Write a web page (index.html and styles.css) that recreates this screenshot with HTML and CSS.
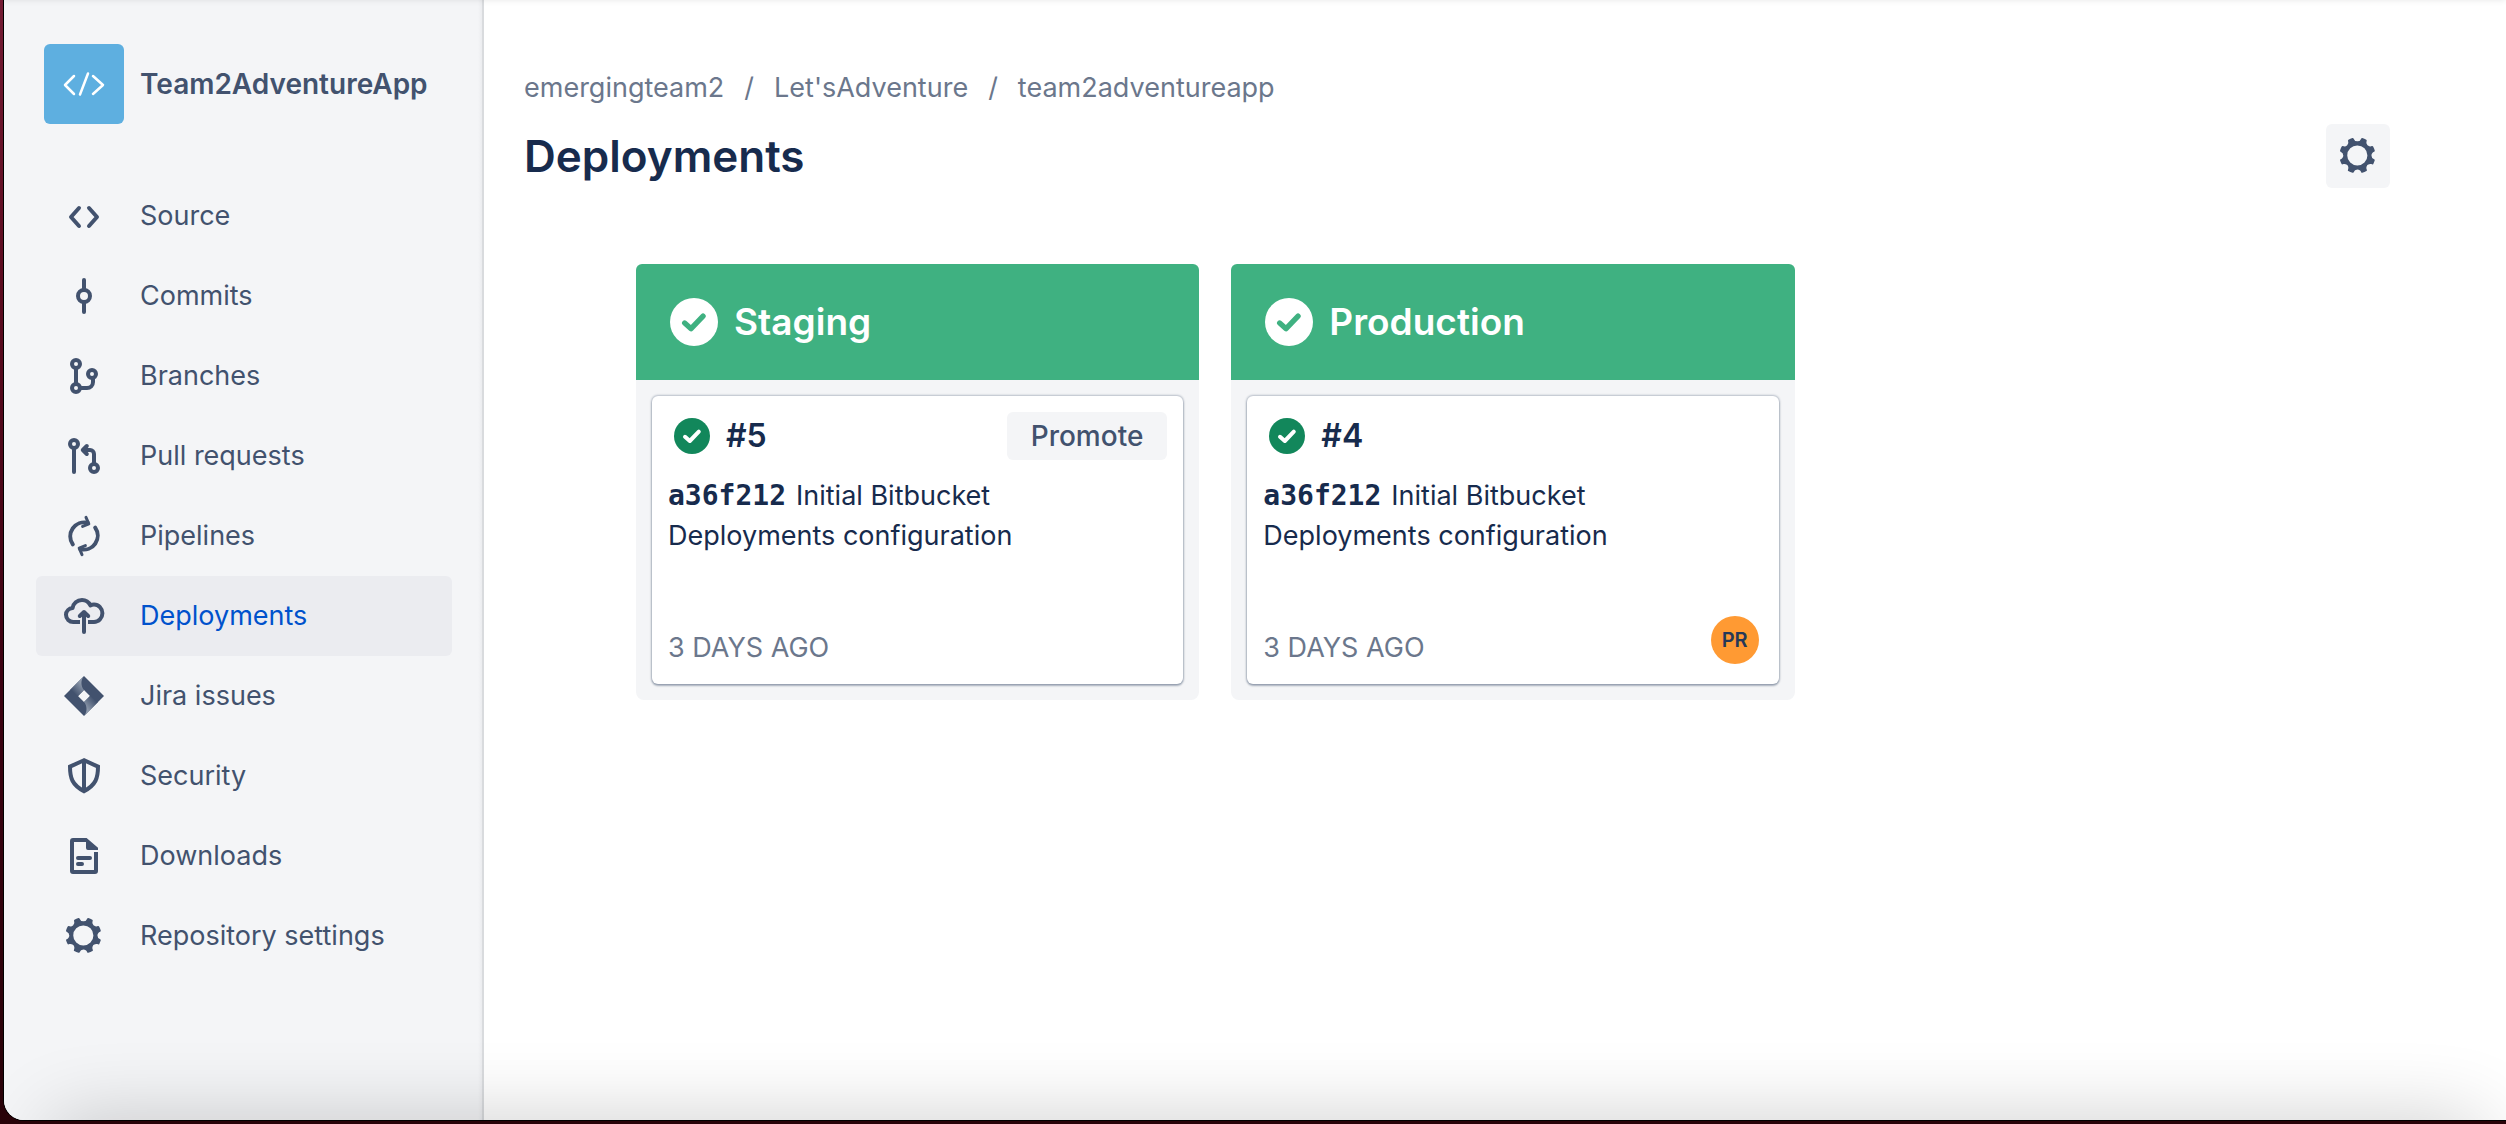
FILE: index.html
```html
<!DOCTYPE html>
<html lang="en">
<head>
<meta charset="utf-8">
<title>Deployments - team2adventureapp</title>
<link rel="stylesheet" href="styles.css">
</head>
<body>
<div class="window">
  <aside class="sidebar">
    <a class="repo" href="#">
      <svg class="repo-logo" viewBox="0 0 80 80" aria-hidden="true"><path d="M30 32l-9 9 9 9M49 32l10 9-10 9M44 29.500l-8 21"/></svg>
      <span>Team2AdventureApp</span>
    </a>
    <nav class="nav" aria-label="Repository">
      <a class="nav-item" href="#">
        <svg class="icon" viewBox="0 0 24 24"><path d="M9.500 8l-4 4.500 4 4.500M14.500 8l4 4.500-4 4.500"/></svg>
        <span>Source</span>
      </a>
      <a class="nav-item" href="#">
        <svg class="icon" viewBox="0 0 24 24"><circle cx="12" cy="12" r="3"/><path d="M12 4v5M12 15v5"/></svg>
        <span>Commits</span>
      </a>
      <a class="nav-item" href="#">
        <svg class="icon" viewBox="0 0 24 24"><circle cx="8" cy="6" r="2"/><circle cx="8" cy="18" r="2"/><circle cx="16" cy="11" r="2"/><path d="M8 8v8M10 18h3.500a3 3 0 0 0 3-3v-2"/></svg>
        <span>Branches</span>
      </a>
      <a class="nav-item" href="#">
        <svg class="icon" viewBox="0 0 24 24"><circle cx="7" cy="6" r="2"/><circle cx="17" cy="18" r="2"/><path d="M7 8v12M17 16v-5a2 2 0 0 0-2-2h-3.500M13.400 7l-2 2 2 2"/></svg>
        <span>Pull requests</span>
      </a>
      <a class="nav-item" href="#">
        <svg class="icon" viewBox="0 0 24 24"><path d="M6.400 16.200A7 7 0 0 1 13.800 5.400M17.600 7.800A7 7 0 0 1 10.200 18.600"/><path class="fine" d="M13 2.700l1.400 3.200-3.100 1.300M11 21.300l-1.400-3.200 3.100-1.300"/></svg>
        <span>Pipelines</span>
      </a>
      <a class="nav-item selected" href="#" aria-current="page">
        <svg class="icon" viewBox="0 0 24 24"><path class="butt" d="M10 15H6.700A3.600 3.600 0 0 1 3 11.400C3 9.500 4.500 8.200 6.300 8 6.600 5.700 8.600 4 11 4c1.900 0 3.400 1 4.200 2.700.6-.3 1.200-.4 1.800-.4a4.200 4.350 0 0 1 0 8.700h-3"/><path d="M12 20V10M9.900 12l2.100-2 2.100 2"/></svg>
        <span>Deployments</span>
      </a>
      <a class="nav-item" href="#">
        <svg class="icon solid" viewBox="0 0 24 24">
          <defs>
            <linearGradient id="fade-a" x1="11" y1="6" x2="6.500" y2="10" gradientUnits="userSpaceOnUse"><stop offset="0" stop-color="#8d99ab"/><stop offset="1" stop-color="#42526e"/></linearGradient>
            <linearGradient id="fade-b" x1="13" y1="18" x2="17.500" y2="14" gradientUnits="userSpaceOnUse"><stop offset="0" stop-color="#8d99ab"/><stop offset="1" stop-color="#42526e"/></linearGradient>
          </defs>
          <path fill-rule="evenodd" d="M12 2l10 10-10 10L2 12zM12 9l-3 3 3 3 3-3z"/>
          <path fill="url(#fade-a)" d="M12 2C10.300 4 10.300 7 12 9l-3 3-4-3z"/>
          <path fill="url(#fade-b)" d="M12 22c1.700-2 1.700-5 0-7l3-3 4 3z"/>
        </svg>
        <span>Jira issues</span>
      </a>
      <a class="nav-item" href="#">
        <svg class="icon" viewBox="0 0 24 24"><path class="miter" d="M12 4.100L5 7.300c0 5.700 1 9.100 7 12.300 6-3.200 7-6.600 7-12.300z"/><path class="butt" d="M12 4v15.500"/></svg>
        <span>Security</span>
      </a>
      <a class="nav-item" href="#">
        <svg class="icon" viewBox="0 0 24 24"><path class="butt" d="M18 10v9.500a.5.5 0 0 1-.5.5h-11a.5.5 0 0 1-.5-.5v-15a.5.5 0 0 1 .5-.5H13"/><path class="fill" d="M12 3h1.300L19 7.900V9h-5a1 1 0 0 1-1-1V4z"/><path d="M9 13h6M9 16h2"/></svg>
        <span>Downloads</span>
      </a>
      <a class="nav-item" href="#">
        <svg class="icon solid" viewBox="0 0 24 24"><path id="gear" d="M11.701 16.700a5.002 5.002 0 1 1 0-10.003 5.002 5.002 0 0 1 0 10.004m8.368-3.117a1.995 1.995 0 0 1-1.346-1.885c0-.876.563-1.613 1.345-1.885a.48.48 0 0 0 .315-.574 8.947 8.947 0 0 0-.836-1.993.477.477 0 0 0-.598-.195 2.040 2.040 0 0 1-1.290.08 1.988 1.988 0 0 1-1.404-1.395 2.040 2.040 0 0 1 .076-1.297.478.478 0 0 0-.196-.597 8.980 8.980 0 0 0-1.975-.826.479.479 0 0 0-.574.314 1.995 1.995 0 0 1-1.885 1.346 1.994 1.994 0 0 1-1.884-1.345.482.482 0 0 0-.575-.315c-.708.2-1.379.485-2.004.842a.47.47 0 0 0-.198.582A2.002 2.002 0 0 1 4.445 7.060a.478.478 0 0 0-.595.196 8.946 8.946 0 0 0-.833 1.994.48.48 0 0 0 .308.572 1.995 1.995 0 0 1 1.323 1.877c0 .867-.552 1.599-1.324 1.877a.479.479 0 0 0-.308.57 8.990 8.990 0 0 0 .723 1.790.477.477 0 0 0 .624.194c.595-.273 1.343-.264 2.104.238.117.077.225.185.302.3.527.8.512 1.580.198 2.188a.473.473 0 0 0 .168.628 8.946 8.946 0 0 0 2.110.897.474.474 0 0 0 .57-.313 1.995 1.995 0 0 1 1.886-1.353c.878 0 1.618.567 1.887 1.353a.475.475 0 0 0 .57.313 8.964 8.964 0 0 0 2.084-.883.473.473 0 0 0 .167-.631c-.318-.608-.337-1.393.191-2.195.077-.116.185-.225.302-.302.772-.511 1.527-.513 2.125-.23a.477.477 0 0 0 .628-.19 8.925 8.925 0 0 0 .728-1.793.478.478 0 0 0-.314-.573"/></svg>
        <span>Repository settings</span>
      </a>
    </nav>
  </aside>

  <main class="main">
    <nav class="breadcrumbs" aria-label="Breadcrumbs">
      <a href="#">emergingteam2</a><span>/</span><a href="#">Let'sAdventure</a><span>/</span><a href="#">team2adventureapp</a>
    </nav>
    <header class="page-header">
      <h1>Deployments</h1>
      <button class="button icon-button" type="button" aria-label="Deployment settings"><svg class="icon solid" viewBox="0 0 24 24"><use href="#gear"/></svg></button>
    </header>

    <div class="board">
      <section class="environment">
        <header class="environment-header">
          <svg class="status-large" viewBox="0 0 18 18"><circle cx="9" cy="9" r="9"/><path d="M5.500 9.400l2.400 2.100 4.500-4.700"/></svg>
          <h2>Staging</h2>
        </header>
        <article class="card">
          <div class="card-top">
            <svg class="status-small" viewBox="0 0 18 18"><circle cx="9" cy="9" r="9"/><path d="M5.500 9.400l2.400 2.100 4.500-4.700"/></svg>
            <h3>#5</h3>
            <button class="button promote" type="button">Promote</button>
          </div>
          <p class="message"><code>a36f212</code>Initial Bitbucket Deployments configuration</p>
          <div class="card-bottom"><time>3 DAYS AGO</time></div>
        </article>
      </section>
      <section class="environment">
        <header class="environment-header">
          <svg class="status-large" viewBox="0 0 18 18"><circle cx="9" cy="9" r="9"/><path d="M5.500 9.400l2.400 2.100 4.500-4.700"/></svg>
          <h2>Production</h2>
        </header>
        <article class="card">
          <div class="card-top">
            <svg class="status-small" viewBox="0 0 18 18"><circle cx="9" cy="9" r="9"/><path d="M5.500 9.400l2.400 2.100 4.500-4.700"/></svg>
            <h3>#4</h3>
          </div>
          <p class="message"><code>a36f212</code>Initial Bitbucket Deployments configuration</p>
          <div class="card-bottom"><time>3 DAYS AGO</time><span class="avatar">PR</span></div>
        </article>
      </section>
    </div>
  </main>
</div>
</body>
</html>
```
FILE: styles.css
```css
* {
  box-sizing: border-box;
}

body {
  margin: 0;
  min-height: 100vh;
  padding: 0 0 4px 4px;
  display: flex;
  background: linear-gradient(#741c34, #5c0c20 25%, #3c0212 60%, #280208);
  color: #172b4d;
  font: 27px/40px Inter, "Liberation Sans", sans-serif;
}

h1, h2, h3, p {
  margin: 0;
}

a {
  color: inherit;
  text-decoration: none;
}

.window {
  position: relative;
  flex: 1;
  display: flex;
  overflow: hidden;
  background: #fff;
  border-bottom-left-radius: 20px;
  box-shadow: 0 0 0 1px #000;
}

/* soft shade along the top and bottom edges of the window */
.window::before,
.window::after {
  content: "";
  position: absolute;
  z-index: 1;
  height: 20px;
  pointer-events: none;
}

.window::before {
  left: 0;
  right: 0;
  bottom: 100%;
  box-shadow: 0 0 6px rgba(0, 0, 0, .1);
}

.window::after {
  left: 48px;
  right: 24px;
  top: 100%;
  height: 80px;
  box-shadow: 0 0 80px rgba(0, 0, 0, .2);
}

/* sidebar */

.sidebar {
  flex: none;
  width: 480px;
  padding: 44px 32px 0;
  background: linear-gradient(to left, #d9dbde 2px, #ebecef 2px, #f4f5f7 6px);
  color: #42526e;
}

.repo {
  display: flex;
  align-items: center;
  gap: 16px;
  margin: 0 0 52px 8px;
  font-size: 28px;
  font-weight: 600;
}

.repo-logo {
  width: 80px;
  height: 80px;
  border-radius: 6px;
  background: #5eafe0;
  fill: none;
  stroke: #fff;
  stroke-width: 2.500;
  stroke-linecap: round;
  stroke-linejoin: round;
}

.nav {
  display: flex;
  flex-direction: column;
}

.nav-item {
  display: flex;
  align-items: center;
  gap: 32px;
  height: 80px;
  padding: 0 24px;
  border-radius: 6px;
}

.nav-item.selected {
  background: #ebecf0;
}

.nav-item.selected span {
  color: #0052cc;
}

.icon {
  flex: none;
  width: 48px;
  height: 48px;
  fill: none;
  stroke: #42526e;
  stroke-width: 2;
  stroke-linecap: round;
  stroke-linejoin: round;
}

.icon.solid {
  fill: #42526e;
  stroke: none;
}

.icon .butt {
  stroke-linecap: butt;
}

.icon .miter {
  stroke-linejoin: miter;
}

.icon .fine {
  stroke-width: 1.500;
}

.icon .fill {
  fill: #42526e;
  stroke: none;
}

/* main column */

.main {
  flex: 1;
  padding: 68px 116px 0 40px;
}

.breadcrumbs {
  display: flex;
  gap: 20px;
  color: #6b778c;
}

.page-header {
  display: flex;
  align-items: center;
  justify-content: space-between;
  padding-top: 16px;
}

.page-header h1 {
  font-size: 44px;
  line-height: 56px;
  font-weight: 600;
}

.button {
  border: 0;
  border-radius: 6px;
  background: #f4f5f7;
  color: #42526e;
  font: inherit;
  font-weight: 500;
}

.icon-button {
  display: grid;
  place-items: center;
  width: 64px;
  height: 64px;
  padding: 0;
}

.board {
  display: grid;
  grid-template-columns: repeat(3, 1fr);
  gap: 32px;
  padding: 76px 0 0 112px;
}

.environment {
  padding-bottom: 16px;
  border-radius: 8px;
  background: #f4f5f7;
}

.environment-header {
  display: flex;
  align-items: center;
  gap: 16px;
  height: 116px;
  padding: 0 34px;
  border-radius: 6px 6px 0 0;
  background: #3fb181;
  color: #fff;
}

.environment-header h2 {
  font-size: 37px;
  line-height: 48px;
  font-weight: 600;
}

.status-large,
.status-small {
  flex: none;
  fill: none;
  stroke-width: 2;
  stroke-linecap: round;
  stroke-linejoin: round;
}

.status-large {
  width: 48px;
  height: 48px;
  stroke: #3fb181;
}

.status-large circle {
  fill: #fff;
  stroke: none;
}

.status-small {
  width: 36px;
  height: 36px;
  margin-left: 6px;
  stroke: #fff;
}

.status-small circle {
  fill: #12875b;
  stroke: none;
}

.card {
  display: flex;
  flex-direction: column;
  height: 288px;
  margin: 16px 16px 0;
  padding: 16px;
  border-radius: 6px;
  background: #fff;
  box-shadow: 0 2px 2px rgba(9, 30, 66, .25), 0 0 2px 1px rgba(9, 30, 66, .25);
}

.card-top {
  display: flex;
  align-items: center;
  gap: 16px;
  height: 48px;
}

.card-top h3 {
  font-size: 32px;
  line-height: 40px;
  font-weight: 600;
}

.promote {
  height: 48px;
  margin-left: auto;
  padding: 0 24px;
  font-size: 28px;
}

.message {
  max-width: 400px;
  padding-top: 16px;
  line-height: 40px;
}

.message code {
  margin-right: 10px;
  font: bold 28px/40px "DejaVu Sans Mono", monospace;
}

.card-bottom {
  display: flex;
  align-items: flex-end;
  justify-content: space-between;
  height: 56px;
  margin-top: auto;
  color: #6b778c;
}

.avatar {
  width: 48px;
  height: 48px;
  margin: 0 4px 4px 0;
  border-radius: 50%;
  background: #ff9a33;
  color: #253858;
  font-size: 20px;
  line-height: 48px;
  font-weight: 600;
  text-align: center;
}
```
